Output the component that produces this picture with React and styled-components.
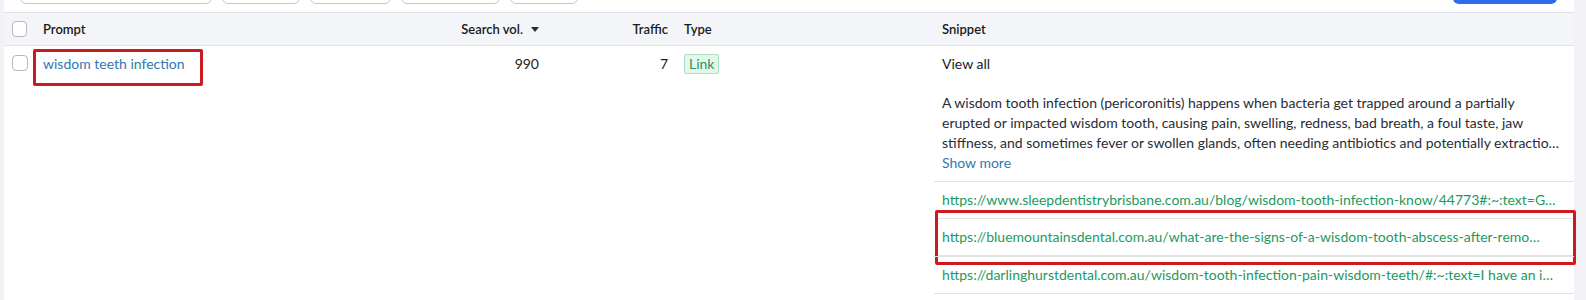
import React from 'react';
import styled, { createGlobalStyle } from 'styled-components';

const GlobalStyle = createGlobalStyle`
  body {
    margin: 0;
    background: #f3f3f7;
    font-family: Lato, "Noto Sans", Arial, sans-serif;
    color: #191b23;
    overflow: hidden;
  }
`;

const Main = styled.div`
  width: 1570px;
  margin-left: 4px;
  background: #fff;
  min-height: 400px;
`;

const Toolbar = styled.div`
  display: flex;
  align-items: center;
  gap: 10px;
  height: 28px;
  margin-top: -24px;
  padding: 0 17px 0 16px;
`;

const ToolButton = styled.div`
  width: ${(p) => p.w}px;
  height: 28px;
  box-sizing: border-box;
  border: 1px solid #c4c7cf;
  border-radius: 6px;
  background: #fff;
`;

const PrimaryButton = styled.div`
  width: 104px;
  height: 28px;
  margin-left: auto;
  border-radius: 6px;
  background: #2f6ce5;
`;

const cols = '31px 392px 120px 129px 258px 640px';

const HeaderRow = styled.div`
  display: grid;
  grid-template-columns: ${cols};
  margin-top: 8px;
  height: 34px;
  box-sizing: border-box;
  background: #f4f5f9;
  border-top: 1px solid #e0e1e9;
  border-bottom: 1px solid #e0e1e9;
  font-size: 13px;
  font-weight: 600;
`;

const HeadCell = styled.div`
  display: flex;
  align-items: center;
  justify-content: ${(p) => (p.right ? 'flex-end' : 'flex-start')};
  gap: 8px;
  padding: 0 8px;
  line-height: 20px;
`;

const Check = styled.span`
  display: inline-block;
  width: 16px;
  height: 16px;
  box-sizing: border-box;
  border: 1px solid #b5b8c2;
  border-radius: 4px;
  background: #fff;
  margin-top: ${(p) => p.top || 0}px;
`;

const BodyRow = styled.div`
  display: grid;
  grid-template-columns: ${cols};
  font-size: 14px;
  line-height: 20px;
`;

const Cell = styled.div`
  padding: 8px 8px 0;
  text-align: ${(p) => (p.right ? 'right' : 'left')};
`;

// red annotation frame drawn over a piece of content
const Marked = styled.span`
  position: relative;
  display: inline-block;
  &::after {
    content: '';
    position: absolute;
    top: ${(p) => p.t}px;
    bottom: ${(p) => p.b}px;
    left: ${(p) => p.l}px;
    right: ${(p) => p.r}px;
    border: 3px solid #cc1a1f;
    border-radius: 2px;
    pointer-events: none;
  }
`;

const PromptLink = styled.a`
  color: #3179b0;
  text-decoration: none;
`;

const Badge = styled.span`
  display: inline-block;
  padding: 0 4px;
  line-height: 18px;
  border: 1px solid #a9e0c3;
  border-radius: 2px;
  background: #e5f7ed;
  color: #1f9a5c;
`;

const SnippetCell = styled.div`
  padding-top: 8px;
`;

const Pad = styled.div`
  padding: 0 8px;
`;

const Summary = styled.p`
  margin: 19px 0 0;
  padding: 0 8px;
  color: #2a2c35;
  max-height: 60px;
  overflow: hidden;
`;

const ShowMore = styled.a`
  display: block;
  padding: 0 8px;
  margin-bottom: 8px;
  color: #3179b0;
`;

const UrlItem = styled.div`
  position: relative;
  border-top: 1px solid #e0e1e9;
  padding: 8px;
  color: #23995f;
  white-space: nowrap;
  overflow: hidden;
  text-overflow: ellipsis;
  &:last-child {
    border-bottom: 1px solid #e0e1e9;
  }
`;

const UrlBox = styled.div`
  position: relative;
  &::after {
    content: '';
    position: absolute;
    top: -8px;
    bottom: -9px;
    left: 1px;
    right: -2px;
    border: 3px solid #cc1a1f;
    border-radius: 2px;
    pointer-events: none;
  }
`;

const SortArrow = () => (
  <svg width="8" height="5" viewBox="0 0 8 5">
    <path d="M0 0h8L4 5z" fill="#2a2c35" />
  </svg>
);

const urls = [
  'https://www.sleepdentistrybrisbane.com.au/blog/wisdom-tooth-infection-know/44773#:~:text=G…',
  'https://bluemountainsdental.com.au/what-are-the-signs-of-a-wisdom-tooth-abscess-after-remo…',
  'https://darlinghurstdental.com.au/wisdom-tooth-infection-pain-wisdom-teeth/#:~:text=I have an i…',
];

export default function App() {
  return (
    <>
      <GlobalStyle />
      <Main>
        <Toolbar>
          {[192, 78, 81, 99, 68].map((w, i) => (
            <ToolButton key={i} w={w} />
          ))}
          <PrimaryButton />
        </Toolbar>
        <HeaderRow>
          <HeadCell><Check /></HeadCell>
          <HeadCell>Prompt</HeadCell>
          <HeadCell right>Search vol. <SortArrow /></HeadCell>
          <HeadCell right>Traffic</HeadCell>
          <HeadCell>Type</HeadCell>
          <HeadCell>Snippet</HeadCell>
        </HeaderRow>
        <BodyRow>
          <Cell><Check top={1} /></Cell>
          <Cell>
            <Marked t={-5} b={-12} l={-10} r={-18}>
              <PromptLink>wisdom teeth infection</PromptLink>
            </Marked>
          </Cell>
          <Cell right>990</Cell>
          <Cell right>7</Cell>
          <Cell><Badge>Link</Badge></Cell>
          <SnippetCell>
            <Pad>View all</Pad>
            <Summary>
              A wisdom tooth infection (pericoronitis) happens when bacteria get trapped around a partially
              erupted or impacted wisdom tooth, causing pain, swelling, redness, bad breath, a foul taste, jaw
              stiffness, and sometimes fever or swollen glands, often needing antibiotics and potentially extractio…
            </Summary>
            <ShowMore>Show more</ShowMore>
            <UrlItem>{urls[0]}</UrlItem>
            <UrlBox><UrlItem>{urls[1]}</UrlItem></UrlBox>
            <UrlItem>{urls[2]}</UrlItem>
          </SnippetCell>
        </BodyRow>
      </Main>
    </>
  );
}
